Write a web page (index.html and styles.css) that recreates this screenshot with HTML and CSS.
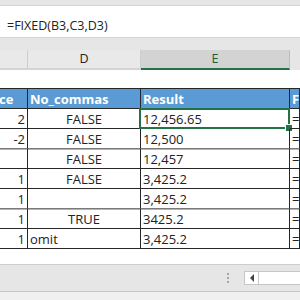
FILE: index.html
```html
<!DOCTYPE html>
<html lang="en">
<head>
    <meta charset="UTF-8">
    <meta name="viewport" content="width=device-width, initial-scale=1.0">
    <title>FIXED function</title>
    <link rel="stylesheet" href="styles.css">
</head>
<body>
    <!-- Ribbon edge -->
    <div class="topband"></div>

    <!-- Formula bar -->
    <div class="formula">=FIXED(B3,C3,D3)</div>

    <!-- Column headers -->
    <div class="colheads">
        <div class="colhead">&nbsp;</div>
        <div class="colhead">D</div>
        <div class="colhead active">E</div>
        <div class="colhead blank"></div>
    </div>

    <div class="spacer"></div>

    <!-- Sheet -->
    <div class="sheet">
        <div class="cell head clip">ce</div>
        <div class="cell head left">No_commas</div>
        <div class="cell head left">Result</div>
        <div class="cell head left">F</div>

        <div class="cell num">2</div>
        <div class="cell mid">FALSE</div>
        <div class="cell left selected">12,456.65</div>
        <div class="cell left">=</div>

        <div class="cell num soft">-2</div>
        <div class="cell mid soft">FALSE</div>
        <div class="cell left soft">12,500</div>
        <div class="cell left soft">=</div>

        <div class="cell num"></div>
        <div class="cell mid">FALSE</div>
        <div class="cell left">12,457</div>
        <div class="cell left">=</div>

        <div class="cell num">1</div>
        <div class="cell mid">FALSE</div>
        <div class="cell left">3,425.2</div>
        <div class="cell left">=</div>

        <div class="cell num soft">1</div>
        <div class="cell mid soft"></div>
        <div class="cell left soft">3,425.2</div>
        <div class="cell left soft">=</div>

        <div class="cell num">1</div>
        <div class="cell mid">TRUE</div>
        <div class="cell left">3425.2</div>
        <div class="cell left">=</div>

        <div class="cell num">1</div>
        <div class="cell left">omit</div>
        <div class="cell left">3,425.2</div>
        <div class="cell left">=</div>
    </div>

    <!-- Sheet tabs / scroll bar -->
    <div class="tabbar">
        <div class="grip"><span></span><span></span><span></span></div>
        <div class="scroll-btn"><span class="arrow"></span></div>
        <div class="track"></div>
    </div>
    <div class="status"></div>
</body>
</html>
```

FILE: styles.css
```css
* {
    margin: 0;
    padding: 0;
    box-sizing: border-box;
}

body {
    width: 300px;
    height: 300px;
    overflow: hidden;
    font-family: "Open Sans", "Liberation Sans", sans-serif;
    color: #222;
    background-color: #fff;
}

.topband {
    height: 6px;
    background-color: #e6e6e6;
    border-bottom: 1px solid #d4d4d4;
}

.formula {
    height: 32px;
    padding: 12px 0 0 7px;
    font-size: 12.5px;
    line-height: 16px;
    color: #222;
    background-color: #fff;
    border-bottom: 1px solid #d4d4d4;
}

.colheads {
    display: grid;
    grid-template-columns: 28px 113px 149px 1fr;
    height: 32px;
    padding-top: 12px;
    background-color: #e6e6e6;
}

.colhead {
    height: 20px;
    font-size: 12.5px;
    line-height: 18px;
    text-align: center;
    color: #222;
    background-color: #e9e9e9;
    border-right: 1px solid #cdcdcd;
    border-bottom: 2px solid #d4d4d4;
}

.colhead.active {
    color: #1e5c3a;
    background-color: #d3d3d3;
    border-right-color: #bdbdbd;
    border-bottom-color: #217346;
}

.colhead.blank {
    background-color: #e6e6e6;
    border: none;
}

.spacer {
    height: 18px;
}

.sheet {
    display: grid;
    grid-template-columns: 28px 113px 149px 1fr;
    grid-auto-rows: 20px;
    border-top: 1px solid #262626;
}

.cell {
    position: relative;
    padding: 0 2px;
    font-size: 13px;
    line-height: 20px;
    white-space: nowrap;
    overflow: hidden;
    border-right: 1px solid #262626;
    border-bottom: 1px solid #262626;
}

.cell.head {
    color: #fff;
    font-weight: bold;
    background-color: #5b9bd5;
}

/* tail of a header that starts off screen */
.cell.clip {
    padding: 0;
    text-indent: -1px;
}

.cell.num {
    text-align: right;
}

.cell.mid {
    text-align: center;
}

.cell.left {
    text-align: left;
}

.cell.soft {
    border-bottom-color: #7a7a7a;
    box-shadow: 0 1px 0 #b4b4b4;
}

.cell.selected {
    overflow: visible;
}

/* active cell outline with fill handle */
.cell.selected::before {
    content: "";
    position: absolute;
    top: -1px;
    left: -2px;
    right: -1px;
    bottom: -1px;
    border: 2px solid #217346;
}

.cell.selected::after {
    content: "";
    position: absolute;
    right: -4px;
    bottom: -4px;
    width: 6px;
    height: 6px;
    background-color: #217346;
    border: 1px solid #fff;
}

.tabbar {
    display: flex;
    align-items: center;
    height: 28px;
    margin-top: 15px;
    padding-left: 227px;
    background-color: #e6e6e6;
    border-top: 1px solid #cdcdcd;
    border-bottom: 1px solid #c6c6c6;
}

.grip {
    display: flex;
    flex-direction: column;
    gap: 2px;
    width: 17px;
}

.grip span {
    width: 2px;
    height: 2px;
    background-color: #a6a6a6;
}

.scroll-btn {
    display: flex;
    align-items: center;
    justify-content: center;
    width: 15px;
    height: 14px;
    background-color: #fff;
    border: 1px solid #c6c6c6;
}

.arrow {
    width: 0;
    height: 0;
    border-top: 4px solid transparent;
    border-bottom: 4px solid transparent;
    border-right: 4px solid #444;
}

.track {
    flex: 1;
    height: 14px;
    margin-left: -1px;
    background-color: #fff;
    border: 1px solid #c6c6c6;
    border-right: none;
}

.status {
    height: 20px;
    background-color: #f0f0f0;
}
```
